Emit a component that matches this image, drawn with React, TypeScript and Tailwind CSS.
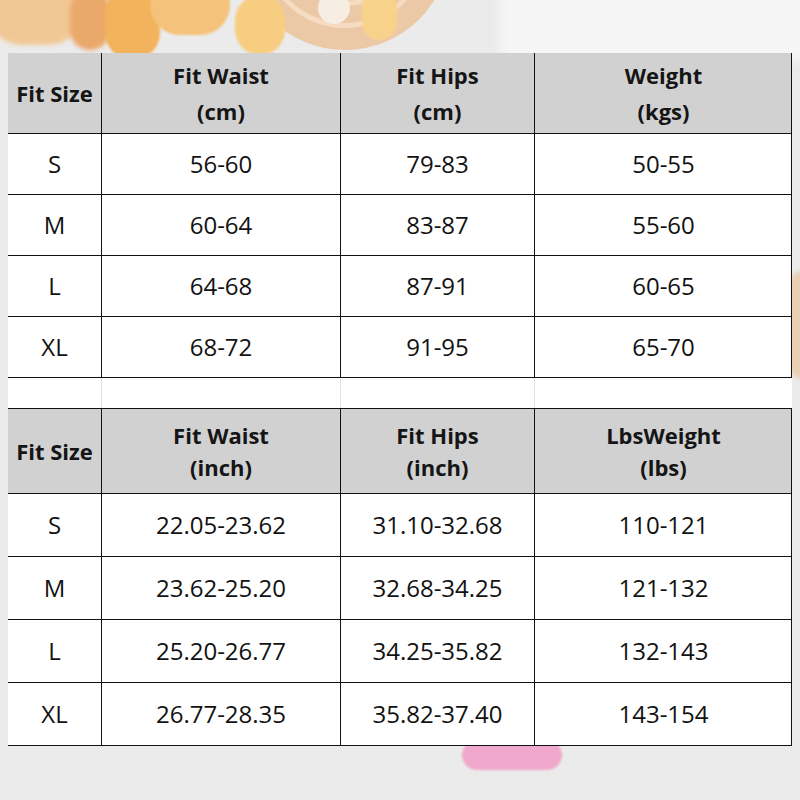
import React from "react";

const font = { fontFamily: '"Open Sans", "Noto Sans", sans-serif' };

const cols = "grid grid-cols-[94px_239px_194px_257px]";

const cmRows = [
  ["S", "56-60", "79-83", "50-55"],
  ["M", "60-64", "83-87", "55-60"],
  ["L", "64-68", "87-91", "60-65"],
  ["XL", "68-72", "91-95", "65-70"],
];

const inchRows = [
  ["S", "22.05-23.62", "31.10-32.68", "110-121"],
  ["M", "23.62-25.20", "32.68-34.25", "121-132"],
  ["L", "25.20-26.77", "34.25-35.82", "132-143"],
  ["XL", "26.77-28.35", "35.82-37.40", "143-154"],
];

function Header({ cells, h, lh }: { cells: string[][]; h: string; lh: string }) {
  return (
    <div className={`${cols} bg-[#d1d1d1] border-r-[1.5px] border-r-[#111] ${h}`}>
      {cells.map((lines, i) => (
        <div
          key={i}
          className={`flex flex-col items-center justify-center font-bold text-[22px] text-[#151515] ${lh} ${
            i < 3 ? "border-r-[1.5px] border-[#111]" : ""
          } border-b-[1.5px] border-b-[#111]`}
        >
          {lines.map((l) => (
            <span key={l}>{l}</span>
          ))}
        </div>
      ))}
    </div>
  );
}

function Rows({ rows, h }: { rows: string[][]; h: string }) {
  return (
    <>
      {rows.map((r) => (
        <div key={r[0]} className={`${cols} bg-white border-r-[1.5px] border-r-[#111] ${h}`}>
          {r.map((c, i) => (
            <div
              key={i}
              className={`flex items-center justify-center text-[24px] text-[#121212] border-b-[1.5px] border-b-[#111] ${
                i < 3 ? "border-r-[1.5px] border-r-[#111]" : ""
              }`}
            >
              {c}
            </div>
          ))}
        </div>
      ))}
    </>
  );
}

export default function App() {
  return (
    <div className="relative w-[800px] h-[800px] overflow-hidden bg-[#ebebeb]" style={font}>
      {/* photo backdrop: wooden tray, flowers, textured cloth */}
      <div className="absolute left-[500px] -top-[40px] w-[320px] h-[100px] bg-[#f5f5f5] blur-[6px]" />
      <div className="absolute left-[240px] -top-[160px] w-[210px] h-[210px] rounded-full bg-[#ecc9a6]" />
      <div className="absolute left-[262px] -top-[138px] w-[166px] h-[166px] rounded-full border-[5px] border-[#f6dcc2]" />
      <div className="absolute left-[284px] -top-[116px] w-[122px] h-[122px] rounded-full border-[5px] border-[#f6dcc2]" />
      <div className="absolute -left-[15px] -top-[30px] w-[100px] h-[75px] rounded-full bg-[#f1c895] blur-[2px]" />
      <div className="absolute left-[70px] -top-[10px] w-[40px] h-[60px] rounded-full bg-[#eaa86a] blur-[2px]" />
      <div className="absolute left-[105px] -top-[15px] w-[55px] h-[75px] rounded-full bg-[#f3b25c] blur-[1px]" />
      <div className="absolute left-[150px] -top-[25px] w-[80px] h-[60px] rounded-full bg-[#f4c27a] blur-[1px]" />
      <div className="absolute left-[235px] -top-[5px] w-[50px] h-[60px] rounded-full bg-[#f7cd82] blur-[1px]" />
      <div className="absolute left-[362px] -top-[10px] w-[35px] h-[50px] rounded-full bg-[#f8d28b] blur-[1px]" />
      <div className="absolute left-[318px] -top-[8px] w-[32px] h-[32px] rounded-full bg-[#f6eee2]" />
      <div className="absolute left-[786px] top-[270px] w-[40px] h-[110px] rounded-full bg-[#e9d0b5] blur-[2px]" />
      <div className="absolute left-[462px] top-[740px] w-[100px] h-[30px] rounded-full bg-[#f0a9cc] blur-[1px]" />

      <div className="relative flex flex-col pl-[8px] pt-[53px]">
        <div className="w-[784px] text-[#161616]">
          <Header
            h="h-[81px]"
            lh="leading-[36px]"
            cells={[["Fit Size"], ["Fit Waist", "(cm)"], ["Fit Hips", "(cm)"], ["Weight", "(kgs)"]]}
          />
          <Rows rows={cmRows} h="h-[61px]" />
          <div className={`${cols} bg-white h-[31px] border-b-[1.5px] border-b-[#111]`}>
            <div className="border-r border-r-[#e2e2e2]" />
            <div className="border-r border-r-[#e2e2e2]" />
            <div className="border-r border-r-[#e2e2e2]" />
            <div />
          </div>
          <Header
            h="h-[85px]"
            lh="leading-[32px]"
            cells={[["Fit Size"], ["Fit Waist", "(inch)"], ["Fit Hips", "(inch)"], ["LbsWeight", "(lbs)"]]}
          />
          <Rows rows={inchRows} h="h-[63px]" />
        </div>
      </div>
    </div>
  );
}
